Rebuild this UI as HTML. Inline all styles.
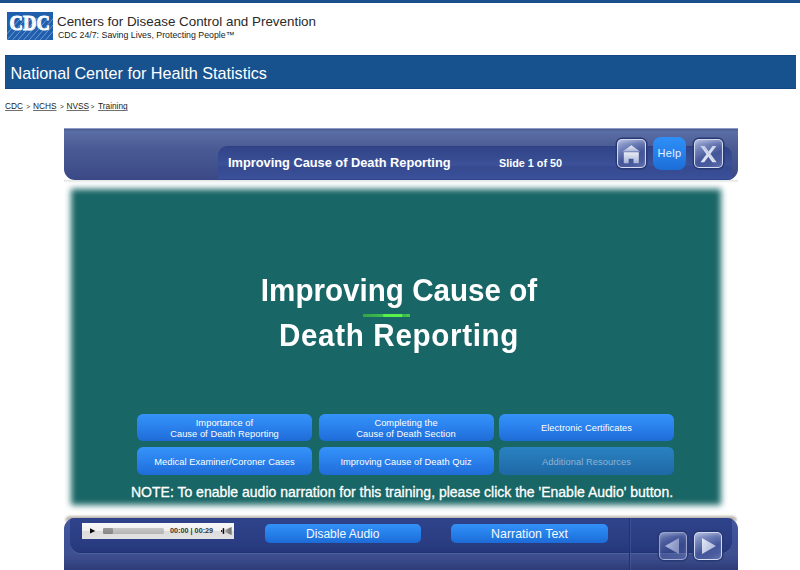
<!DOCTYPE html>
<html><head><meta charset="utf-8">
<style>
*{margin:0;padding:0;box-sizing:border-box}
html,body{width:800px;height:570px;overflow:hidden;background:#fff;font-family:"Liberation Sans",sans-serif}
.a{position:absolute;white-space:nowrap}
#topline{left:0;top:0;width:800px;height:3px;background:#1b4f8e}
#t1{left:57px;top:13.9px;font-size:13.4px;line-height:16px;color:#2a2a2a}
#t2{left:58px;top:30px;font-size:8.8px;line-height:10px;color:#222}
#bar{left:5px;top:55px;width:791px;height:34px;background:#17528f;border-top:1px solid #104784;border-bottom:1px solid #104784}
#bar span{position:absolute;left:5.5px;top:7px;font-size:16.2px;line-height:20px;color:#fff}
#crumb{top:101.2px;font-size:8.3px;line-height:11px;color:#1c1c1c}
#crumb u{position:absolute;text-decoration:underline;text-decoration-color:#707070;text-underline-offset:1px}
#crumb b{position:absolute;font-weight:normal;font-size:6.5px;top:-0.3px}
#hdr{left:64px;top:128px;width:674px;height:51.5px;border-radius:0 0 11px 11px;overflow:hidden;background:linear-gradient(#8b9bc6 0,#8b9bc6 1px,#4d5d96 1px,#4d5d96 2px,#5b6ea4 3px,#4a5a94 40%,#3b4a86)}
#tab{position:absolute;left:154px;top:17.6px;width:514px;height:40px;border-radius:9px 9px 0 0;background:linear-gradient(#2d3f7f 0,#32458a 4%,#374b91 30%,#3c5197 46%,#3a4f95 48%,#354a90 52%,#384e96 75%,#3b519a 81%,#2f4590 84%)}
#htitle{left:228px;top:155.4px;font-size:12.8px;line-height:15px;font-weight:bold;color:#fff}
#slidenum{left:499px;top:156px;font-size:10.8px;line-height:15px;font-weight:bold;color:#fff}
#hshadow{left:64px;top:180px;width:674px;height:3px;background:linear-gradient(#dfe2e2,#fff)}
#slide{left:70.5px;top:189px;width:650px;height:315.5px;background:#186665;filter:blur(3.3px)}
.ttl{position:absolute;left:99px;width:600px;text-align:center;font-size:32px;font-weight:bold;color:#fff;line-height:40px;transform:scaleX(0.925);transform-origin:300px 0}
#gl{left:362.5px;top:314.2px;width:47px;height:2.4px;background:linear-gradient(90deg,#34a44a 0,#3cbf4a 42%,#56ee48 44%,#5cf24a 82%,#3fc04a 84%,#3cb84a 92%,#48d04a 94%,#40c04a 100%)}
.btn{position:absolute;width:175px;height:27.5px;border-radius:6px;background:linear-gradient(#3593f9,#2a80ec 50%,#1f6cd8);color:#fff;font-size:9.3px;text-align:center;display:flex;align-items:center;justify-content:center;line-height:10.8px;padding-top:2.6px;letter-spacing:0.05px}
.btn.dis{background:linear-gradient(#2a82c0,#2475b4 50%,#1f68a6);color:#8fb4d4}
#note{left:131px;top:484px;font-size:14px;-webkit-text-stroke:0.3px #fff;line-height:16px;color:#fff}
#fshadow{left:65px;top:515.8px;width:672px;height:5px;border-radius:11px 11px 0 0;background:rgba(95,80,60,0.42);filter:blur(1px)}
#ftr{left:64px;top:517.5px;width:674px;height:53px;border-radius:11px 11px 0 0;overflow:hidden;background:linear-gradient(#4458a0,#3d5096 50%,#3f508f 67%,#3a4a8a 78%,#2c3a74)}
#fin{position:absolute;left:6px;top:0;width:661.5px;height:35px;border-radius:0 0 11px 11px;background:linear-gradient(#2f438b,#2b3e84 60%,#26387b 95%,#203070);box-shadow:0 1px 0 rgba(100,120,190,0.4)}
#vsep{position:absolute;left:565px;top:0;width:1px;height:53px;background:#22326f;box-shadow:1px 0 0 rgba(90,110,180,0.35)}
#player{left:82px;top:523px;width:152px;height:16px;background:linear-gradient(#f8f8f8,#f0f0f0 50%,#dcdcdc 50%,#e2e2e2)}
#track{left:103px;top:528px;width:61px;height:6px;border-radius:1.5px;background:linear-gradient(#c8c8c8,#b4b4b4)}
#knob{left:103px;top:528px;width:10px;height:6px;border-radius:1.2px;background:linear-gradient(#9a9a9a,#858585)}
#time{left:170px;top:526.3px;font-size:7.25px;line-height:10px;font-weight:bold;color:#333}
.bb{position:absolute;height:19.5px;border-radius:5px;background:linear-gradient(#3391f7,#2680ea 50%,#1d6bd6);color:#f4f8ff;font-size:12px;line-height:21.5px;text-align:center}
.glass{position:absolute;border-radius:5px;border:1.5px solid rgba(225,231,248,0.88);box-shadow:0 0 0 1.5px #283872,inset 0 2px 3px rgba(255,255,255,0.18);background:linear-gradient(155deg,#a8b3da 0%,#7181b9 28%,#44569a 58%,#4a5c9e 80%,#6374b0 100%)}
.glass.dim{border-color:rgba(205,214,242,0.6);background:linear-gradient(155deg,rgba(170,183,225,0.6) 0%,rgba(120,135,195,0.42) 30%,rgba(90,105,170,0.3) 60%,rgba(120,135,195,0.4) 100%)}
#help{left:653px;top:137px;width:33px;height:32.5px;border-radius:8px;background:linear-gradient(#2f8ff7,#2580ea 50%,#1c6dd6);color:#e9f1ff;font-size:11px;line-height:33.4px;text-align:center;letter-spacing:0.3px}
</style></head><body>
<div id="topline" class="a"></div>
<svg class="a" style="left:7px;top:12px" width="46" height="28" viewBox="0 0 46 28">
<defs><clipPath id="cp"><rect x="0" y="6" width="46" height="22"/></clipPath></defs>
<rect x="0" y="0" width="46" height="28" fill="#1f5fae"/>
<text x="22.7" y="18.1" text-anchor="middle" font-family="Liberation Serif" font-weight="bold" font-size="21.5" fill="#fff" stroke="#fff" stroke-width="1.1" textLength="40.2" lengthAdjust="spacingAndGlyphs">CDC</text>
<g clip-path="url(#cp)" stroke="#b7cbea" stroke-width="0.6" opacity="0.9"><line x1="-8" y1="31" x2="18" y2="1"/><line x1="-2.5" y1="31" x2="23.5" y2="1"/><line x1="3" y1="31" x2="29" y2="1"/><line x1="8.5" y1="31" x2="34.5" y2="1"/><line x1="14" y1="31" x2="40" y2="1"/><line x1="19.5" y1="31" x2="45.5" y2="1"/><line x1="25" y1="31" x2="51" y2="1"/><line x1="30.5" y1="31" x2="56.5" y2="1"/><line x1="36" y1="31" x2="62" y2="1"/></g>
</svg>
<div id="t1" class="a">Centers for Disease Control and Prevention</div>
<div id="t2" class="a">CDC 24/7: Saving Lives, Protecting People™</div>
<div id="bar" class="a"><span>National Center for Health Statistics</span></div>
<div id="crumb" class="a"><u style="left:5px">CDC</u><b style="left:26.2px">&gt;</b><u style="left:33px">NCHS</u><b style="left:60px">&gt;</b><u style="left:66.5px">NVSS</u><b style="left:90.6px">&gt;</b><u style="left:98px">Training</u></div>
<div id="hdr" class="a"><div id="tab"></div></div>
<div id="htitle" class="a">Improving Cause of Death Reporting</div>
<div id="slidenum" class="a">Slide 1 of 50</div>
<div class="glass" style="left:617px;top:139px;width:29px;height:29px"></div>
<svg class="a" style="left:617px;top:139px" width="29" height="29" viewBox="0 0 29 29">
<defs><linearGradient id="hg" x1="0" y1="0" x2="0" y2="1"><stop offset="0" stop-color="#e8ecf6"/><stop offset="1" stop-color="#a9b4d6"/></linearGradient></defs>
<path d="M14.3 6.2 L23 12.6 L5.6 12.6 Z" fill="url(#hg)"/>
<path d="M6.8 13.3 H21.8 V24.3 H16.5 V19.8 H11.6 V24.3 H6.8 Z" fill="url(#hg)"/>
</svg>
<div id="help" class="a">Help</div>
<div class="glass" style="left:694px;top:139px;width:29px;height:29px"></div>
<svg class="a" style="left:694px;top:139px" width="29" height="29" viewBox="0 0 29 29">
<defs><linearGradient id="xg" x1="0" y1="0" x2="0.3" y2="1"><stop offset="0" stop-color="#c9d1ea"/><stop offset="1" stop-color="#e4e8f5"/></linearGradient></defs>
<path d="M6.4 7 L10.6 7 L22.6 23.3 L18.4 23.3 Z" fill="url(#xg)"/>
<path d="M18.6 7 L22.3 7 L10.2 23.3 L6.5 23.3 Z" fill="url(#xg)"/>
<path d="M9.3 7.5 L20.6 22.8" stroke="#8f9bc8" stroke-width="0.5" opacity="0.7"/>
</svg>
<div id="hshadow" class="a"></div>
<div id="slide" class="a"></div>
<div class="ttl" style="top:269.8px">Improving Cause of</div>
<div class="ttl" style="top:315px;letter-spacing:0.72px">Death Reporting</div>
<div id="gl" class="a"></div>
<div class="btn" style="left:137px;top:413.5px">Importance of<br>Cause of Death Reporting</div>
<div class="btn" style="left:318.5px;top:413.5px">Completing the<br>Cause of Death Section</div>
<div class="btn" style="left:499px;top:413.5px">Electronic Certificates</div>
<div class="btn" style="left:137px;top:447px">Medical Examiner/Coroner Cases</div>
<div class="btn" style="left:318.5px;top:447px">Improving Cause of Death Quiz</div>
<div class="btn dis" style="left:499px;top:447px">Additional Resources</div>
<div id="note" class="a">NOTE: To enable audio narration for this training, please click the 'Enable Audio' button.</div>
<div id="fshadow" class="a"></div>
<div id="ftr" class="a"><div id="fin"></div><div id="vsep"></div></div>
<div id="player" class="a"></div>
<svg class="a" style="left:88px;top:526px" width="10" height="10" viewBox="0 0 10 10"><path d="M2 2.2 L7.3 4.9 L2 7.6 Z" fill="#080808"/></svg>
<div id="track" class="a"></div>
<div id="knob" class="a"></div>
<div id="time" class="a">00:00 | 00:29</div>
<svg class="a" style="left:220px;top:526px" width="13" height="10" viewBox="0 0 13 10">
<defs><linearGradient id="spk" x1="0" y1="0" x2="1" y2="0"><stop offset="0" stop-color="#c4c4c4"/><stop offset="0.5" stop-color="#8a8a8a"/><stop offset="1" stop-color="#707070"/></linearGradient></defs>
<rect x="1.1" y="4" width="1.1" height="2" fill="#111"/><rect x="2.7" y="2.2" width="1.5" height="5.6" fill="#000"/>
<path d="M4.2 4.3 L11.6 0.9 V8.9 L4.2 5.7 Z" fill="url(#spk)"/>
</svg>
<div class="bb" style="left:264.5px;top:523.5px;width:156.5px">Disable Audio</div>
<div class="bb" style="left:451px;top:523.5px;width:157px;font-size:12.4px">Narration Text</div>
<div class="glass dim" style="left:659px;top:532px;width:28px;height:28px"></div>
<svg class="a" style="left:659px;top:532px" width="28" height="28" viewBox="0 0 28 28"><defs><linearGradient id="pg" x1="0" y1="0" x2="1" y2="0.4"><stop offset="0" stop-color="#c4cde8"/><stop offset="1" stop-color="#8f9cc8"/></linearGradient></defs><path d="M6 14 L20 6 V22 Z" fill="url(#pg)" opacity="0.9"/></svg>
<div class="glass" style="left:694px;top:532px;width:28px;height:28px"></div>
<svg class="a" style="left:694px;top:532px" width="28" height="28" viewBox="0 0 28 28"><defs><linearGradient id="ng" x1="0" y1="0" x2="1" y2="0.6"><stop offset="0" stop-color="#e6eaf6"/><stop offset="1" stop-color="#aab5da"/></linearGradient></defs><path d="M8 6 L22 14 L8 22 Z" fill="url(#ng)"/></svg>
</body></html>
